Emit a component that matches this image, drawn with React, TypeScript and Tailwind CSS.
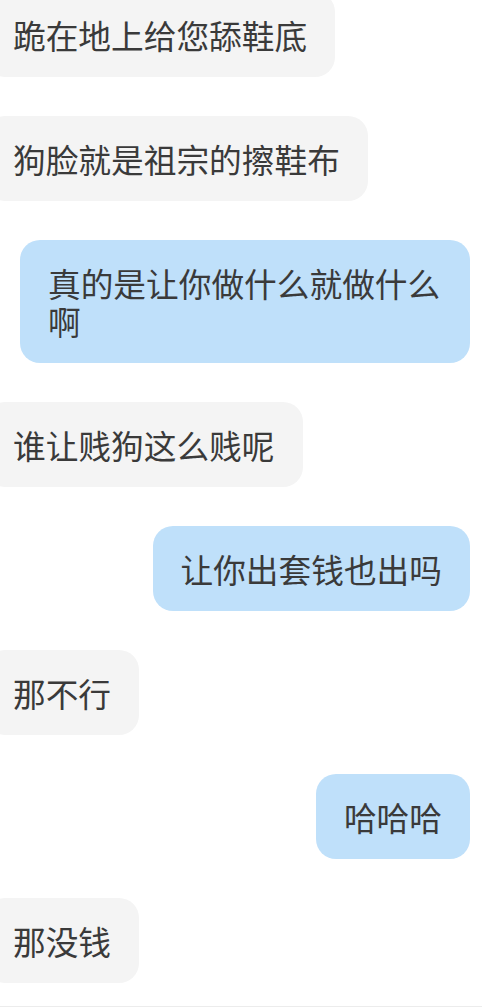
const messages: { text: string; mine: boolean }[] = [
  { text: '跪在地上给您舔鞋底', mine: false },
  { text: '狗脸就是祖宗的擦鞋布', mine: false },
  { text: '真的是让你做什么就做什么啊', mine: true },
  { text: '谁让贱狗这么贱呢', mine: false },
  { text: '让你出套钱也出吗', mine: true },
  { text: '那不行', mine: false },
  { text: '哈哈哈', mine: true },
  { text: '那没钱', mine: false },
];

function Bubble({ text, mine }: { text: string; mine: boolean }) {
  return (
    <div
      className={
        mine
          ? 'mr-3 max-w-[450px] self-end rounded-[20px] bg-[#bfe0fa] px-7 py-[23.5px]'
          : 'ml-[-15px] max-w-[450px] self-start rounded-[20px] bg-[#f4f4f4] px-7 py-[23.5px]'
      }
    >
      <p className="text-[32.7px] leading-[38px] text-[#3a3a3a]">{text}</p>
    </div>
  );
}

export default function App() {
  return (
    <div
      className="h-[1007px] w-[482px] overflow-hidden border-b border-[#ececec] bg-white"
      style={{ fontFamily: '"Noto Sans CJK SC", "Noto Sans", sans-serif' }}
    >
      <div className="mt-[-8px] flex flex-col gap-[39px]">
        {messages.map((m, i) => (
          <Bubble key={i} text={m.text} mine={m.mine} />
        ))}
      </div>
    </div>
  );
}
